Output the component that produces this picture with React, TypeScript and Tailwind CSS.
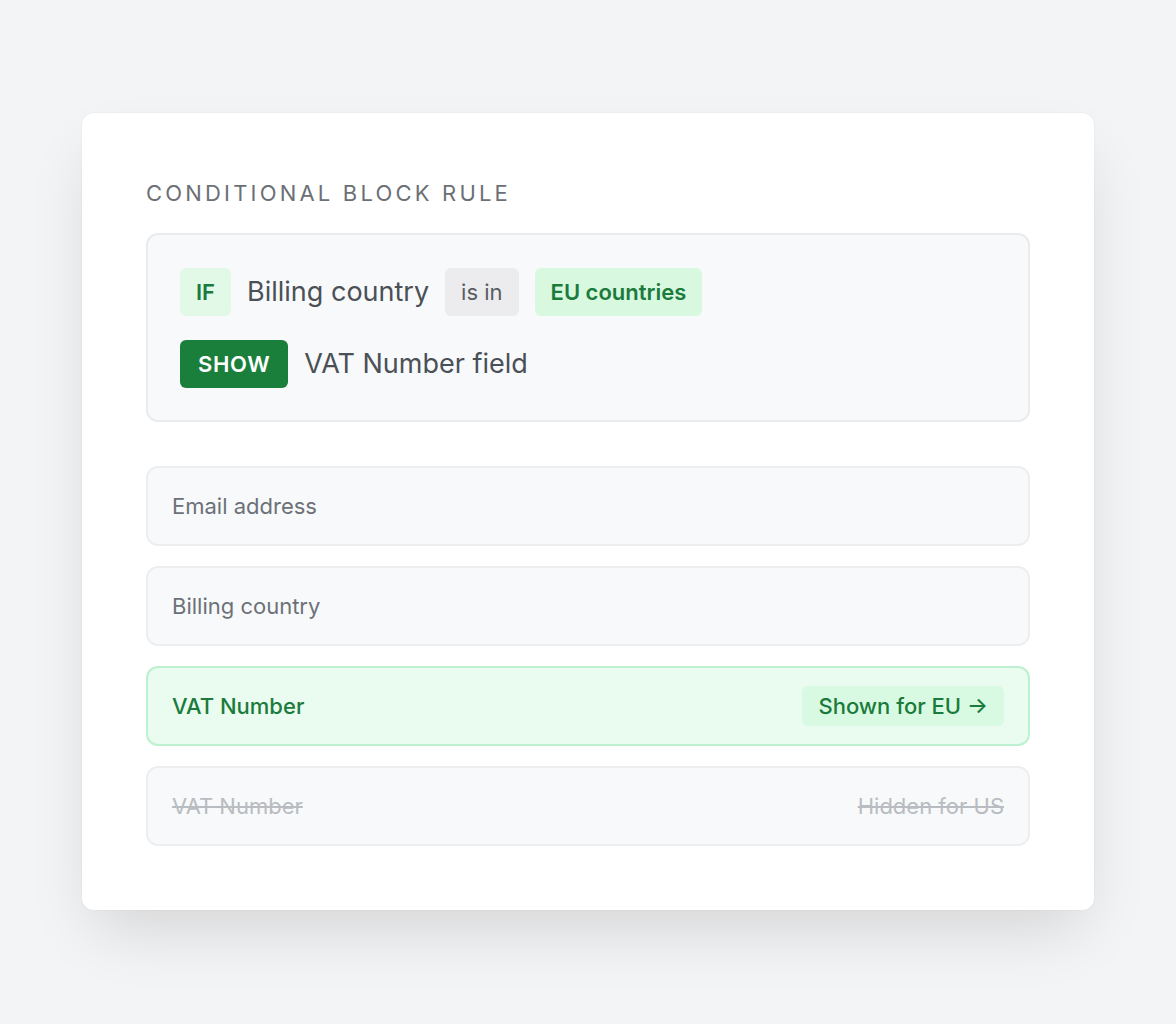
import type { ReactNode } from 'react';

const font = { fontFamily: 'Inter, "Noto Sans", sans-serif' };

function Chip({ children, tone }: { children: ReactNode; tone: 'soft' | 'gray' | 'solid' | 'mint' }) {
  const tones = {
    soft: 'bg-[#e3f9e8] text-[#1b7b3c] font-semibold px-4',
    gray: 'bg-[#ececee] text-[#585d63] font-normal px-4',
    solid: 'bg-[#1b7f3c] text-white font-semibold tracking-[0.03em] px-[18px]',
    mint: 'bg-[#d8f8e0] text-[#1b7b3c] font-semibold px-4'
  };
  return (
    <span className={`inline-flex h-12 items-center rounded-md text-[22px] ${tones[tone]}`}>{children}</span>
  );
}

function Field({ label, right, variant = 'plain' }: { label: string; right?: ReactNode; variant?: 'plain' | 'active' | 'hidden' }) {
  return (
    <div
      className={
        'flex h-20 items-center justify-between rounded-xl border-2 px-6 text-[22px] ' +
        (variant === 'active'
          ? 'border-[#bdf0cf] bg-[#eafbef] text-[#1b7b3c] font-medium'
          : 'border-[#eceef0] bg-[#f8f9fa] text-[#6c7178]')
      }
    >
      <span className={variant === 'hidden' ? 'text-[#b9bcc1] line-through' : ''}>{label}</span>
      {right}
    </div>
  );
}

export default function App() {
  return (
    <div className="min-h-[1024px] bg-[#f3f4f5] pt-[113px]" style={font}>
      <div className="mx-auto w-[1012px] rounded-xl bg-white px-16 pb-16 pt-[66px] shadow-[0_30px_60px_-12px_rgba(0,0,0,0.13),0_0_0_1px_rgba(0,0,0,0.02)]">
        <h2 className="text-[22px] leading-7 tracking-[0.145em] text-[#6b7076]">CONDITIONAL BLOCK RULE</h2>

        <div className="mt-[26px] flex flex-col gap-6 rounded-xl border-2 border-[#e9ebed] bg-[#f8f9fa] px-8 pb-8 pt-[33px]">
          <div className="flex items-center gap-4">
            <Chip tone="soft">IF</Chip>
            <span className="text-[27px] text-[#4b5057]">Billing country</span>
            <Chip tone="gray">is in</Chip>
            <Chip tone="mint">EU countries</Chip>
          </div>
          <div className="flex items-center gap-4">
            <Chip tone="solid">SHOW</Chip>
            <span className="text-[27px] text-[#4b5057]">VAT Number field</span>
          </div>
        </div>

        <div className="mt-[44px] flex flex-col gap-5">
          <Field label="Email address" />
          <Field label="Billing country" />
          <Field
            label="VAT Number"
            variant="active"
            right={
              <span className="inline-flex h-10 items-center rounded-md bg-[#d9fae2] px-4 text-[22px] font-medium text-[#1b7b3c]">
                Shown for EU →
              </span>
            }
          />
          <Field
            label="VAT Number"
            variant="hidden"
            right={<span className="text-[#b9bcc1] line-through">Hidden for US</span>}
          />
        </div>
      </div>
    </div>
  );
}
